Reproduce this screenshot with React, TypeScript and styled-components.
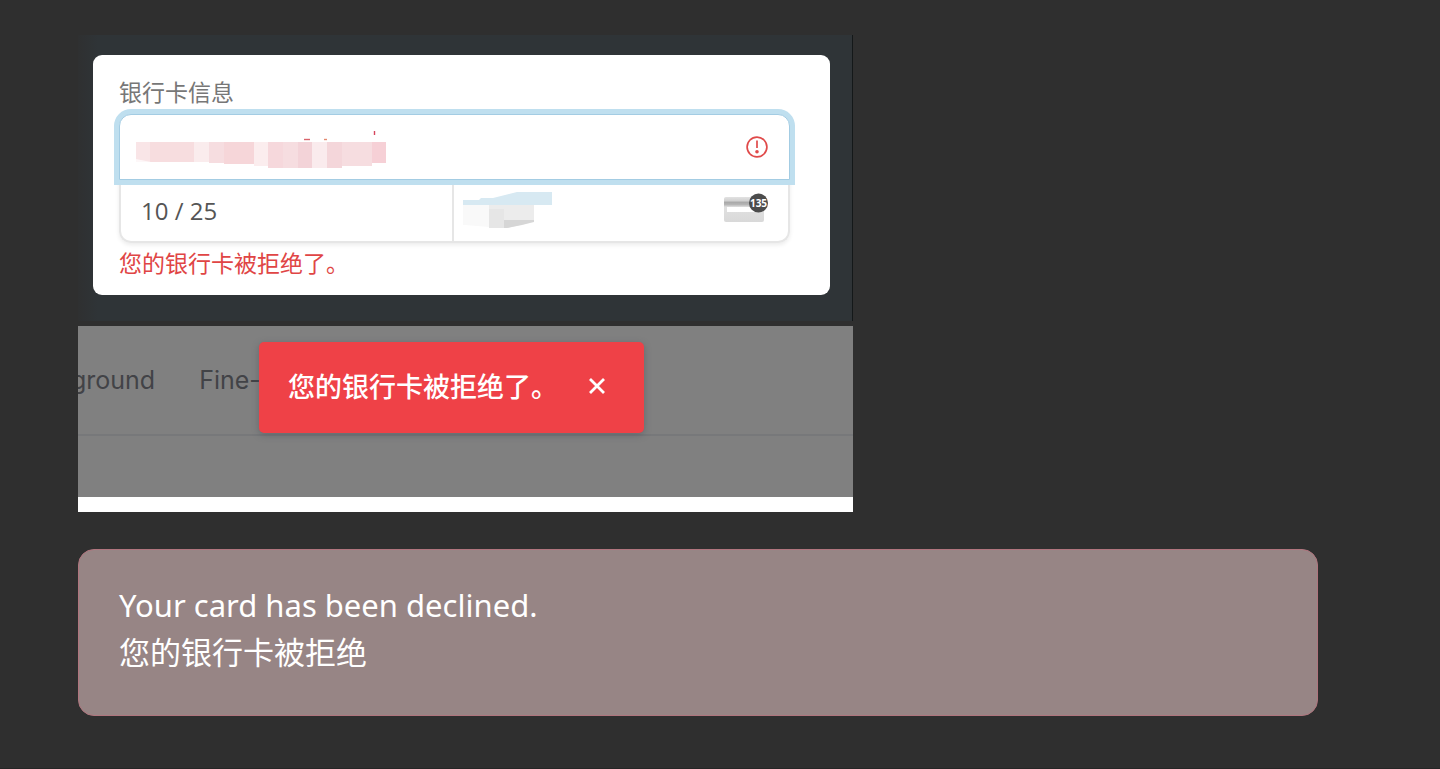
import React from "react";
import styled, { createGlobalStyle, css } from "styled-components";

const GlobalStyle = createGlobalStyle`
  * { box-sizing: border-box; }
  body {
    margin: 0;
    background: #2f2f2f;
    font-family: "Noto Sans", "Noto Sans CJK SC", sans-serif;
  }
`;

const Page = styled.main`
  min-height: 100vh;
  padding: 35px 122px 52px 78px;
  border-bottom: 1px solid #262626;
`;

const Shots = styled.div`
  width: 62.5%;
  display: flex;
  flex-direction: column;
  gap: 5px;
`;

const PaymentShot = styled.section`
  padding: 20px 22px 26px 15px;
  border-right: 1px solid #141819;
  background: linear-gradient(to right, #2f3031, #2f3437 20px);
`;

const Card = styled.form`
  height: 240px;
  padding: 22px 40px 0 26px;
  border-radius: 9px;
  background: #fff;
`;

const Label = styled.label`
  display: block;
  height: 37px;
  font: 400 23px/28px "Noto Sans CJK SC", sans-serif;
  color: #777;
`;

const Fields = styled.div`
  border-radius: 12px;
  box-shadow: 0 2px 4px rgba(0, 0, 0, 0.08);
`;

const Field = styled.div`
  position: relative;
  flex: 1;
`;

const ExpiryField = styled(Field)`
  flex: 0 0 333px;
`;

const Split = styled.div`
  display: flex;
`;

type Corner = "top" | "left" | "right";

const corners: Record<Corner, string> = {
  top: "12px 12px 0 0",
  left: "0 0 0 12px",
  right: "0 0 12px 0",
};

const Input = styled.input<{ $corner: Corner; $active?: boolean }>`
  display: block;
  width: 100%;
  height: 63px;
  padding: 0 20px;
  border: 2px solid #e6e6e6;
  border-top-width: 0;
  border-radius: ${(p) => corners[p.$corner]};
  outline: none;
  background: #fff;
  color: #555;
  font: 400 24px/32px "Open Sans", sans-serif;
  ${(p) => p.$corner === "left" && css`border-right-width: 0;`}
  ${(p) =>
    p.$active &&
    css`
      position: relative;
      z-index: 1;
      height: 66px;
      border: 1px solid #a3cce3;
      box-shadow: 0 0 0 5px #bfdfef;
    `}
`;

const Overlay = styled.svg<{ $left?: number; $right?: number; $top: number }>`
  position: absolute;
  z-index: 2;
  top: ${(p) => p.$top}px;
  ${(p) => (p.$left !== undefined ? `left: ${p.$left}px;` : `right: ${p.$right}px;`)}
  pointer-events: none;
`;

const ErrorText = styled.p`
  margin: 5px 0 0;
  font: 400 23px/28px "Noto Sans CJK SC", sans-serif;
  color: #e04545;
`;

const SiteShot = styled.section`
  position: relative;
  overflow: hidden;
  height: 186px;
  background: #808080;
  border-bottom: 15px solid #fff;
`;

const Nav = styled.nav`
  display: flex;
  align-items: center;
  gap: 44px;
  height: 110px;
  margin-left: -7px;
  border-bottom: 2px solid #77787a;
`;

const NavLink = styled.a`
  color: #424347;
  text-decoration: none;
  font: 400 25px/30px Inter, sans-serif;
`;

const Toast = styled.div`
  position: absolute;
  top: 16px;
  left: 181px;
  display: flex;
  align-items: center;
  gap: 27px;
  width: 385px;
  height: 91px;
  padding: 0 0 3px 29px;
  border-radius: 5px;
  background: #ef4147;
  box-shadow: 0 2px 7px rgba(60, 70, 80, 0.4);
  color: #fff;
  font: 500 27px/36px "Noto Sans CJK SC", sans-serif;
`;

const Close = styled.button`
  display: flex;
  padding: 3px;
  border: 0;
  background: none;
  color: inherit;
`;

const Callout = styled.aside`
  margin-top: 37px;
  padding: 32px 40px 43px;
  border: 1px solid #b0757e;
  border-radius: 16px;
  background: #978585;
  color: #fff;
  font-size: 31px;
`;

const Line = styled.p`
  margin: 0;
  line-height: 47px;
`;

const ChineseLine = styled.p`
  margin: 0;
  font: 400 31px/43px "Noto Sans CJK SC", sans-serif;
`;

const numberBlocks: [number, number, number, string][] = [
  [0, 14, 20, "#f9e5e7"],
  [14, 44, 20, "#f7dddf"],
  [58, 15, 20, "#faeced"],
  [73, 15, 21, "#f6dde0"],
  [88, 30, 22, "#f6d6d9"],
  [118, 14, 24, "#fbedee"],
  [132, 15, 26, "#f6d8dc"],
  [147, 15, 26, "#f6dde0"],
  [162, 14, 26, "#f3d3d8"],
  [176, 15, 26, "#faebed"],
  [191, 15, 26, "#f4d6da"],
  [206, 30, 24, "#f6dde0"],
  [236, 14, 21, "#f6d0d6"],
];

function NumberMask() {
  return (
    <Overlay $left={17} $top={16} width="252" height="40" viewBox="0 0 252 40" aria-hidden>
      {numberBlocks.map(([x, w, h, fill]) => (
        <rect key={x} x={x} y="12" width={w} height={h} fill={fill} />
      ))}
      <path d="M0 29l20 4h30l30 1 40 4H0zM250 33l-22 5h22z" fill="#fff" opacity=".7" />
      <path d="M168 9.5h6" stroke="#d9646c" strokeWidth="1.4" />
      <path d="M188 9.5h3" stroke="#e48a70" strokeWidth="1.4" />
      <path d="M238.500 1v4" stroke="#d6455c" strokeWidth="1.4" />
    </Overlay>
  );
}

function CodeMask() {
  return (
    <Overlay $left={11} $top={12} width="90" height="38" viewBox="0 0 90 38" aria-hidden>
      <path d="M0 8h16l2-2h12l8-2 16-4h35v13H0z" fill="#d7e9f2" />
      <path d="M0 13h26v22l-24-2H0z" fill="#f9f9f9" />
      <path d="M26 13h45v16l-10 3-16 4H26z" fill="#ececec" />
      <path d="M26 17h15v19H26z" fill="#e6e6e6" />
      <path d="M41 28h30v2l-12 3-15 3h-3z" fill="#d6d6d6" />
    </Overlay>
  );
}

function AlertIcon() {
  return (
    <Overlay $right={22} $top={22} width="22" height="22" viewBox="0 0 22 22" aria-hidden>
      <circle cx="11" cy="11" r="9.900" fill="none" stroke="#e04a4a" strokeWidth="1.700" />
      <path d="M11 4.500v7.500" stroke="#e04a4a" strokeWidth="1.700" />
      <circle cx="11" cy="15.800" r="1.800" fill="#e04a4a" />
    </Overlay>
  );
}

function CardIcon() {
  return (
    <Overlay $right={22} $top={13} width="44" height="30" viewBox="0 0 44 30" aria-hidden>
      <defs>
        <linearGradient id="card-face" x2="0" y2="1">
          <stop offset="0" stopColor="#e2e2e2" />
          <stop offset="0.14" stopColor="#d2d2d2" />
          <stop offset="0.22" stopColor="#aaa" />
          <stop offset="0.3" stopColor="#b5b5b5" />
          <stop offset="0.4" stopColor="#e0e0e0" />
          <stop offset="1" stopColor="#d9d9d9" />
        </linearGradient>
      </defs>
      <rect y="4" width="40" height="25" rx="2" fill="url(#card-face)" />
      <rect x="3" y="14" width="33" height="5" fill="#fff" />
      <circle cx="34.500" cy="10" r="9.500" fill="#4c4c4c" />
      <text x="34.500" y="14" textAnchor="middle" fontFamily="Open Sans, sans-serif" fontSize="10" fontWeight="700" fill="#fff">
        135
      </text>
    </Overlay>
  );
}

export default function App() {
  return (
    <Page>
      <GlobalStyle />
      <Shots>
        <PaymentShot>
          <Card>
            <Label htmlFor="card-number">银行卡信息</Label>
            <Fields>
              <Field>
                <Input id="card-number" $corner="top" $active aria-invalid aria-describedby="card-error" />
                <NumberMask />
                <AlertIcon />
              </Field>
              <Split>
                <ExpiryField>
                  <Input $corner="left" aria-label="有效期" defaultValue="10 / 25" />
                </ExpiryField>
                <Field>
                  <Input $corner="right" aria-label="安全码" />
                  <CodeMask />
                  <CardIcon />
                </Field>
              </Split>
            </Fields>
            <ErrorText id="card-error">您的银行卡被拒绝了。</ErrorText>
          </Card>
        </PaymentShot>
        <SiteShot>
          <Nav>
            <NavLink href="#ground">ground</NavLink>
            <NavLink href="#fine">Fine-</NavLink>
          </Nav>
          <Toast role="alert">
            您的银行卡被拒绝了。
            <Close type="button" aria-label="关闭">
              <svg width="18" height="18" viewBox="0 0 18 18" fill="none" stroke="currentColor" strokeWidth="2.800">
                <path d="M2 2l14 14M16 2l-14 14" />
              </svg>
            </Close>
          </Toast>
        </SiteShot>
      </Shots>
      <Callout>
        <Line lang="en">Your card has been declined.</Line>
        <ChineseLine lang="zh">您的银行卡被拒绝</ChineseLine>
      </Callout>
    </Page>
  );
}
